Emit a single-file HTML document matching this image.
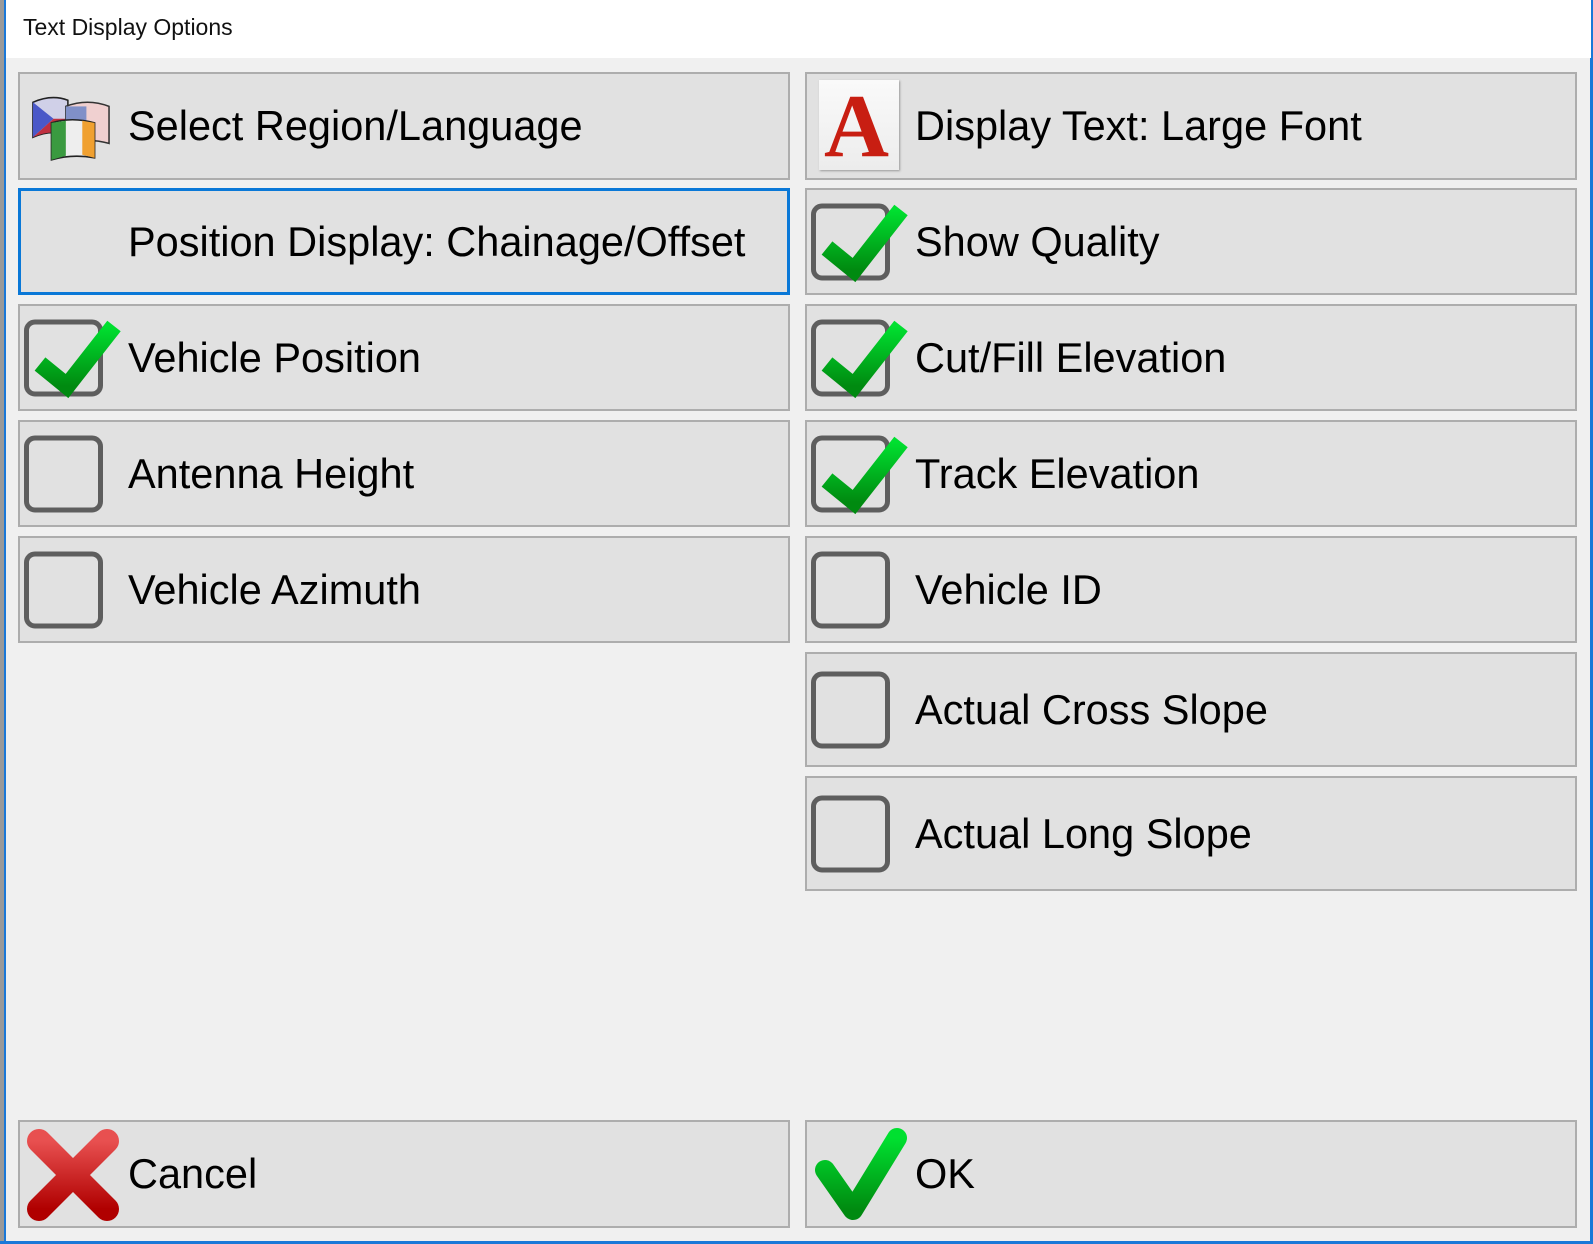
<!DOCTYPE html>
<html><head><meta charset="utf-8"><style>
*{margin:0;padding:0;box-sizing:border-box}
body{width:1593px;height:1244px;background:#f0f0f0;position:relative;overflow:hidden;font-family:"Liberation Sans",sans-serif}
.title{position:absolute;left:6px;top:0;width:1585px;height:58px;background:#fff}
.title span{position:absolute;left:17px;top:14px;font-size:23px;color:#111}
.lb{position:absolute;left:4px;top:0;width:2px;height:1244px;background:#1a78d8}
.l0{position:absolute;left:0;top:0;width:4px;height:1244px;background:#9a9a9a}
.rb{position:absolute;left:1590px;top:0;width:3px;height:1244px;background:#1a78d8}
.bb{position:absolute;left:0;top:1241px;width:1593px;height:3px;background:#1a78d8}
.btn{position:absolute;width:772px;background:#e1e1e1;border:2px solid #adadad}
.btn.f{border:3px solid #0a78d7}
.t{position:absolute;left:108px;top:50%;transform:translateY(-50%);font-size:41.5px;color:#000;white-space:nowrap}
.cb{position:absolute;left:4px;top:50%;transform:translateY(-50%);width:79px;height:77px;border:5px solid #5e5e5e;border-radius:11px}
.ck{position:absolute;left:0;top:0;overflow:visible}
</style></head><body>
<div class="l0"></div><div class="lb"></div><div class="rb"></div><div class="bb"></div>
<div class="title"><span>Text Display Options</span></div>
<svg width="0" height="0" style="position:absolute"><defs>
<linearGradient id="g" x1="0" y1="0" x2="0" y2="1"><stop offset="0" stop-color="#00e030"/><stop offset="1" stop-color="#008a10"/></linearGradient>
<linearGradient id="r" x1="0" y1="0" x2="0" y2="1"><stop offset="0" stop-color="#e85050"/><stop offset="1" stop-color="#b00000"/></linearGradient>
</defs></svg>

<div class="btn" style="left:18px;top:72px;height:108px">
 <svg style="position:absolute;left:10px;top:18px" width="84" height="72" viewBox="0 0 80 70">
  <path d="M2 10 Q20 2 36 8 L36 42 Q20 36 2 44Z" fill="#d0d0e8" stroke="#222" stroke-width="1.5"/>
  <path d="M2 10 L22 26 L2 44Z" fill="#4a58c8"/><path d="M22 26 L36 26 L36 42 Q20 36 2 44Z" fill="#c03040"/>
  <path d="M34 14 Q55 6 76 14 L76 50 Q55 44 34 50Z" fill="#f0d0d0" stroke="#333" stroke-width="1.5"/>
  <rect x="34" y="14" width="20" height="14" fill="#8090c8"/>
  <path d="M20 30 Q40 24 62 30 L62 64 Q40 60 20 66Z" fill="#eee" stroke="#222" stroke-width="1.5"/>
  <path d="M20 30 L34 28 L34 62 L20 66Z" fill="#3a9a40"/><path d="M50 28 L62 30 L62 64 L50 61Z" fill="#f0a030"/>
 </svg>
 <span class="t">Select Region/Language</span></div>
<div class="btn f" style="left:18px;top:188px;height:107px"><span class="t" style="left:107px">Position Display: Chainage/Offset</span></div>
<div class="btn" style="left:18px;top:304px;height:107px"><div class="cb"></div>
 <svg class="ck" width="110" height="107"><polyline points="20,58 47,80 94,20" fill="none" stroke="url(#g)" stroke-width="17"/></svg>
 <span class="t">Vehicle Position</span></div>
<div class="btn" style="left:18px;top:420px;height:107px"><div class="cb"></div><span class="t">Antenna Height</span></div>
<div class="btn" style="left:18px;top:536px;height:107px"><div class="cb"></div><span class="t">Vehicle Azimuth</span></div>

<div class="btn" style="left:805px;top:72px;height:108px">
 <div style="position:absolute;left:12px;top:6px;width:80px;height:90px;background:linear-gradient(#fafafa,#ececec);box-shadow:1px 1px 2px #999"></div>
 <span style="position:absolute;left:17px;top:5px;font-family:'Liberation Serif',serif;font-size:90px;font-weight:bold;color:#c81e12;line-height:96px">A</span>
 <span class="t">Display Text: Large Font</span></div>
<div class="btn" style="left:805px;top:188px;height:107px"><div class="cb"></div>
 <svg class="ck" width="110" height="107"><polyline points="20,58 47,80 94,20" fill="none" stroke="url(#g)" stroke-width="17"/></svg>
 <span class="t">Show Quality</span></div>
<div class="btn" style="left:805px;top:304px;height:107px"><div class="cb"></div>
 <svg class="ck" width="110" height="107"><polyline points="20,58 47,80 94,20" fill="none" stroke="url(#g)" stroke-width="17"/></svg>
 <span class="t">Cut/Fill Elevation</span></div>
<div class="btn" style="left:805px;top:420px;height:107px"><div class="cb"></div>
 <svg class="ck" width="110" height="107"><polyline points="20,58 47,80 94,20" fill="none" stroke="url(#g)" stroke-width="17"/></svg>
 <span class="t">Track Elevation</span></div>
<div class="btn" style="left:805px;top:536px;height:107px"><div class="cb"></div><span class="t">Vehicle ID</span></div>
<div class="btn" style="left:805px;top:652px;height:115px"><div class="cb"></div><span class="t">Actual Cross Slope</span></div>
<div class="btn" style="left:805px;top:776px;height:115px"><div class="cb"></div><span class="t">Actual Long Slope</span></div>

<div class="btn" style="left:18px;top:1120px;height:108px">
 <svg style="position:absolute;left:4px;top:4px" width="98" height="98"><path d="M15 15 L83 83 M83 15 L15 83" stroke="url(#r)" stroke-width="24" stroke-linecap="round"/></svg>
 <span class="t">Cancel</span></div>
<div class="btn" style="left:805px;top:1120px;height:108px">
 <svg style="position:absolute;left:4px;top:4px" width="98" height="98"><polyline points="14,44 42,84 86,12" fill="none" stroke="url(#g)" stroke-width="20" stroke-linecap="round" stroke-linejoin="round"/></svg>
 <span class="t">OK</span></div>
</body></html>
